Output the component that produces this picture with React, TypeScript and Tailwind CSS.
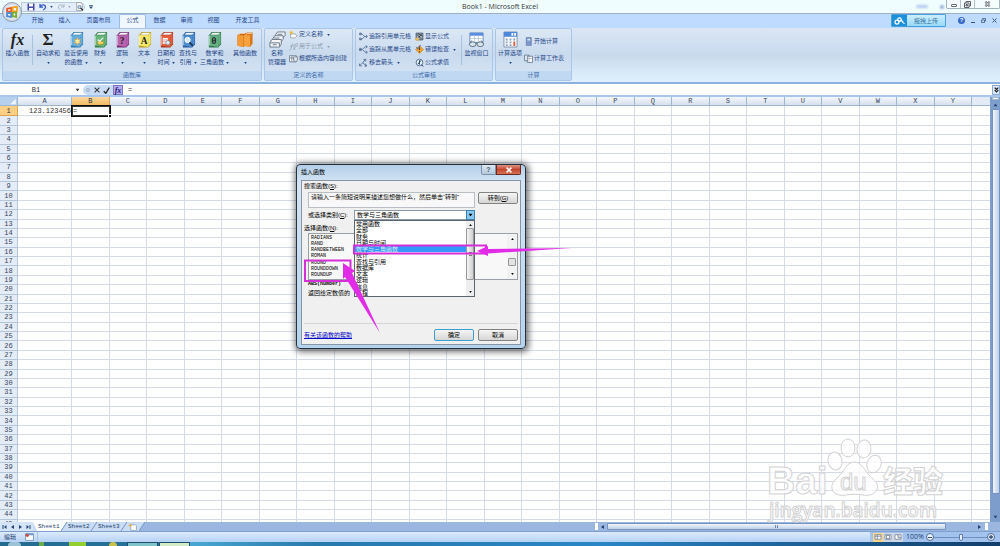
import type { ReactNode } from "react";

const columns = "ABCDEFGHIJKLMNOPQRSTUVWXY".split("");
const rows = Array.from({ length: 45 }, (_, i) => i + 1);

const ribbonTabs = [
  { label: "开始", width: "w-[27px]" },
  { label: "插入", width: "w-[27px]" },
  { label: "页面布局", width: "w-[41px]" },
  { label: "公式", width: "w-[27px]", active: true },
  { label: "数据", width: "w-[27px]" },
  { label: "审阅", width: "w-[27px]" },
  { label: "视图", width: "w-[27px]" },
  { label: "开发工具", width: "w-[41px]" },
];

const functionList = ["RADIANS", "RAND", "RANDBETWEEN", "ROMAN", "ROUND", "ROUNDDOWN", "ROUNDUP"];

const categories = [
  "常用函数",
  "全部",
  "财务",
  "日期与时间",
  "数学与三角函数",
  "统计",
  "查找与引用",
  "数据库",
  "文本",
  "逻辑",
  "信息",
  "工程",
];

const Caret = ({ className = "" }: { className?: string }) => (
  <svg viewBox="0 0 4 3" className={`h-[2px] w-[3px] shrink-0 ${className}`} aria-hidden="true">
    <path d="M0 0h4L2 3z" fill="currentColor" />
  </svg>
);

const Book = ({ color, dark, children }: { color: string; dark: string; children?: ReactNode }) => (
  <svg viewBox="0 0 16 18" className="h-[17px] w-[15px]" aria-hidden="true">
    <path d="M2 4.500 5 1h10v13l-3 3.500H2z" fill={dark} />
    <path d="M3.500 4 6 1.800h8.200L12 4z" fill="#f4f8fb" />
    <path d="M12 4.500 14.500 2v11.500L12 16.500z" fill={color} />
    <path d="M2 4.500h10v12.500L2 15.500z" fill={color} />
    <path d="M2.500 5v10.200" stroke="#fff" strokeOpacity=".5" />
    {children}
  </svg>
);

const Glyph = ({ children, color = "#222" }: { children: string; color?: string }) => (
  <text x="7.500" y="14" textAnchor="middle" fontSize="10" fontWeight="700" fontFamily="Liberation Serif, serif" fill={color}>
    {children}
  </text>
);

const library = [
  {
    lines: ["自动求和"],
    width: "w-[30px]",
    icon: <span className="font-['Liberation_Serif',serif] text-[17px] leading-[17px] font-bold text-[#222]">Σ</span>,
  },
  {
    lines: ["最近使用", "的函数"],
    width: "w-[26px]",
    icon: (
      <Book color="#64aede" dark="#2f76ad">
        <path d="m9 7 1 2.500 2.500-.5-1.500 2 1.500 2-2.500-.5L9 15l-1-2.500-2.500.5L7 11 5.500 9l2.500.5z" fill="#fff0a8" stroke="#ed9f32" strokeWidth=".6" />
      </Book>
    ),
  },
  {
    lines: ["财务"],
    width: "w-[22px]",
    icon: (
      <Book color="#67b57a" dark="#32804b">
        <ellipse cx="8" cy="12.500" rx="3.500" ry="2" fill="#f3d25a" stroke="#9b7a19" strokeWidth=".6" />
        <path d="m5 9 2 2 4-4" fill="none" stroke="#e9f7e9" strokeWidth="1.500" />
      </Book>
    ),
  },
  {
    lines: ["逻辑"],
    width: "w-[22px]",
    icon: (
      <Book color="#b763b0" dark="#742d72">
        <Glyph>?</Glyph>
      </Book>
    ),
  },
  {
    lines: ["文本"],
    width: "w-[22px]",
    icon: (
      <Book color="#f5e96c" dark="#b99d24">
        <Glyph>A</Glyph>
      </Book>
    ),
  },
  {
    lines: ["日期和", "时间"],
    width: "w-[22px]",
    icon: (
      <Book color="#e5603c" dark="#a93621">
        <path d="M4 7.500h5.500v6H4z" fill="#fff" />
        <path d="M4 9.500h5.500M4 11.500h5.500" stroke="#bc5a4d" strokeWidth=".6" />
        <circle cx="9.500" cy="12.500" r="2.300" fill="#e8f1fa" stroke="#54779b" strokeWidth=".7" />
      </Book>
    ),
  },
  {
    lines: ["查找与", "引用"],
    width: "w-[22px]",
    icon: (
      <Book color="#4f8fd0" dark="#24579b">
        <circle cx="7" cy="9.500" r="2.800" fill="#d6eafc" stroke="#fff" />
        <path d="m9 12 3.500 3.500" stroke="#222f4c" strokeWidth="1.700" />
      </Book>
    ),
  },
  {
    lines: ["数学和", "三角函数"],
    width: "w-[31px]",
    icon: (
      <Book color="#66b083" dark="#2d7748">
        <Glyph>θ</Glyph>
      </Book>
    ),
  },
  {
    lines: ["其他函数"],
    width: "w-[30px]",
    icon: (
      <svg viewBox="0 0 18 18" className="h-[17px] w-[18px]" aria-hidden="true">
        <path d="M1 4.500 4 2h6v12l-2 3-7-1.500z" fill="#c96a15" />
        <path d="M1 4.500h6.500V17L1 15.500z" fill="#f39b38" />
        <path d="M8 4.500 11 1.500h6v12l-2.500 3.500-6.500-1.500z" fill="#d67416" />
        <path d="M8 4.500h6.500V17L8 15.500z" fill="#f7a13f" />
        <path d="m2.500 4 2-1.500H9M9.500 4l2-1.500H16" stroke="#fff3df" strokeWidth=".8" fill="none" />
      </svg>
    ),
  },
];

const BigButton = ({
  icon,
  lines,
  width,
  caret = true,
}: {
  icon: ReactNode;
  lines: string[];
  width: string;
  caret?: boolean;
}) => (
  <button type="button" className={`flex shrink-0 flex-col items-center pt-[2px] ${width}`}>
    <span className="flex h-[17px] items-center justify-center">{icon}</span>
    <span className="mt-px h-[9px]">{lines[0]}</span>
    <span className="flex h-[9px] items-center justify-center gap-[2px]">
      {lines[1]}
      {caret && <Caret />}
    </span>
  </button>
);

const SmallButton = ({
  icon,
  label,
  caret,
  disabled,
}: {
  icon: ReactNode;
  label: string;
  caret?: boolean;
  disabled?: boolean;
}) => (
  <button type="button" disabled={disabled} className="flex items-center gap-px whitespace-nowrap disabled:text-[#8b98ab]">
    <svg viewBox="0 0 16 16" className="h-[9px] w-[9px] shrink-0" aria-hidden="true" fill="none">
      {icon}
    </svg>
    {label}
    {caret && <Caret className="ml-[3px]" />}
  </button>
);

const Group = ({ title, width, children }: { title: string; width: string; children: ReactNode }) => (
  <section
    className={`flex shrink-0 flex-col overflow-hidden rounded-[2px] border border-[#a9c5e8] bg-linear-to-b from-[#dce8f6] via-[#c9daee] to-[#d7e6f6] ${width}`}
  >
    <div className="flex h-[42px]">{children}</div>
    <h2 className="h-[9px] bg-[#c0d8f1] text-center text-[#3e6aaa]">{title}</h2>
  </section>
);

const TitleBar = () => (
  <header className="relative flex h-[13px] items-center bg-[#effdff] text-[#444]">
    <div className="ml-[21px] flex h-[10px] w-[64px] items-center gap-[4px] rounded-r-full border border-[#b8cbe0] bg-[#e4eefa] pl-[5px] text-[#35527c]">
      <button type="button" aria-label="保存">
        <svg viewBox="0 0 16 16" className="h-[8px] w-[8px]">
          <path d="M1 1h14v14H1z" fill="#4249a7" />
          <path d="M4 1h8v6H4zM4 10h8v5H4z" fill="#fff" />
        </svg>
      </button>
      <button type="button" aria-label="撤消" className="flex items-center gap-[3px]">
        <svg viewBox="0 0 16 16" className="h-[8px] w-[8px]" fill="none">
          <path d="M2 2v6h6M3 7c3-5 10-4 10 1 0 3-2 5-5 6" stroke="#3156c8" strokeWidth="2.500" />
        </svg>
        <Caret />
      </button>
      <button type="button" aria-label="恢复" className="flex items-center gap-[3px] text-[#9ba9ba]">
        <svg viewBox="0 0 16 16" className="h-[8px] w-[8px]" fill="none">
          <path d="M14 2v6H8M13 7C10 2 3 3 3 8c0 3 2 5 4 6" stroke="#a9b7c8" strokeWidth="2" />
        </svg>
        <Caret />
      </button>
      <button type="button" aria-label="打印预览">
        <svg viewBox="0 0 16 16" className="h-[9px] w-[9px]">
          <path d="M3 1h7l3 3v11H3z" fill="#fff" stroke="#777" />
          <circle cx="8" cy="9" r="3" fill="#b9d9f1" stroke="#3d5573" />
          <path d="m10 11 4 4" stroke="#111" strokeWidth="2" />
        </svg>
      </button>
    </div>
    <button type="button" aria-label="自定义快速访问工具栏" className="ml-[4px] text-[#35527c]">
      <svg viewBox="0 0 5 5" className="h-[4px] w-[4px]">
        <path d="M0 0h5v1H0zM0 2h5L2.500 5z" fill="currentColor" />
      </svg>
    </button>
    <h1 className="absolute inset-x-0 text-center font-['Open_Sans','Noto_Sans',sans-serif] text-[7px] leading-[13px] text-[#333]">
      Book1 - Microsoft Excel
    </h1>
    <div className="ml-auto flex items-center gap-[12px] pr-[2px]">
      <span className="h-[3px] w-[12px] rounded-full bg-[#b5c9ee] blur-[1px]" />
      <span className="h-[4px] w-[4px] rounded-full bg-[#8fa6ce] blur-[1px]" />
    </div>
    <div className="relative mb-auto flex h-[9px] w-[54px] rounded-b-[2px] border border-t-0 border-[#a4b2be] bg-[#f4fcfe]">
      <button type="button" aria-label="最小化" className="flex w-[14px] items-center justify-center border-r border-[#b4c2cd]">
        <span className="mt-[2px] h-[3px] w-[6px] rounded-[1px] border border-[#626b74] bg-white" />
      </button>
      <button type="button" aria-label="还原" className="flex w-[14px] items-center justify-center border-r border-[#b4c2cd]">
        <svg viewBox="0 0 14 14" className="h-[7px] w-[7px]" fill="white" stroke="#59636d" strokeWidth="2">
          <path d="M4 1h9v9H4z" />
          <path d="M1 4h9v9H1zM4 7h3v3H4z" />
        </svg>
      </button>
      <button type="button" aria-label="关闭" className="flex flex-1 items-center justify-center">
        <svg viewBox="0 0 14 14" className="h-[6px] w-[7px]" fill="none">
          <path d="m2 2 10 10M12 2 2 12" stroke="#535c65" strokeWidth="5" />
          <path d="m2 2 10 10M12 2 2 12" stroke="white" strokeWidth="2" />
        </svg>
      </button>
    </div>
    <button
      type="button"
      aria-label="Office 按钮"
      className="absolute top-[2px] left-[2px] z-20 flex h-[20px] w-[20px] items-center justify-center rounded-full border border-[#8e9bb0] bg-radial from-white via-[#e6ebf2] to-[#aeb9ca]"
    >
      <svg viewBox="0 0 20 20" className="h-[14px] w-[14px]" fill="none" strokeWidth="2.600">
        <path d="M3 5.500 9 4v5.500H3z" stroke="#e5572c" />
        <path d="M11 3.500 17 2.500V9h-6z" stroke="#f2a51f" />
        <path d="M3 11.500h6V17l-6-1z" stroke="#4a87d4" />
        <path d="M11 11h5v6l-5-1z" stroke="#79ac34" />
      </svg>
    </button>
  </header>
);

const TabRow = () => (
  <nav className="flex h-[15px] items-end border-t border-[#9fb0c4] bg-[#bfdbff] pl-[24px]">
    {ribbonTabs.map((tab) => (
      <button
        key={tab.label}
        type="button"
        className={`h-[14px] pb-[2px] ${tab.width} ${
          tab.active ? "rounded-t-[2px] border border-b-0 border-[#9bbbe3] bg-[#eff6fe]" : ""
        }`}
      >
        {tab.label}
      </button>
    ))}
    <div className="mb-auto ml-auto flex items-center">
      <button type="button" className="flex h-[13px] w-[55px] overflow-hidden rounded-[1px] border border-[#4a9fdb] bg-linear-to-b from-[#cbeeff] to-[#99d8fa] text-[#35759f]">
        <span className="flex h-full w-[15px] items-center justify-center bg-[#1c91da]">
          <svg viewBox="0 0 22 16" className="h-[8px] w-[11px]" fill="none" stroke="white" strokeWidth="2.500">
            <circle cx="6" cy="10" r="4" />
            <circle cx="11" cy="5" r="3.500" />
            <path d="M10 11c0-5 8-6 8 1M20 12v2" />
          </svg>
        </span>
        <span className="flex-1 leading-[12px]">拖拽上传</span>
      </button>
      <div className="flex w-[54px] items-center justify-end gap-[6px] pr-[3px] text-[#3d5577]">
        <button type="button" aria-label="帮助" className="h-[7px] w-[7px] rounded-full bg-[#3569c4] text-[6px] leading-[7px] font-bold text-white">
          ?
        </button>
        <button type="button" aria-label="最小化窗口" className="flex h-[5px] w-[4px] items-end">
          <span className="h-px w-full bg-[#3d5577]" />
        </button>
        <button type="button" aria-label="还原窗口">
          <svg viewBox="0 0 10 10" className="h-[5px] w-[5px]" fill="none" stroke="currentColor" strokeWidth="1.500">
            <path d="M3 3V1h6v5H7M1 4h6v5H1z" />
          </svg>
        </button>
        <button type="button" aria-label="关闭窗口">
          <svg viewBox="0 0 10 10" className="h-[5px] w-[5px]" stroke="currentColor" strokeWidth="2">
            <path d="m1 1 8 8M9 1 1 9" />
          </svg>
        </button>
      </div>
    </div>
  </nav>
);

const Ribbon = () => (
  <div className="flex gap-[2px] border-b-2 border-[#8db1df] bg-linear-to-b from-[#dbe6f4] via-[#c9daed] to-[#e0f1fd] px-[2px] pb-px">
    <Group title="函数库" width="w-[260px]">
      <BigButton
        lines={["插入函数"]}
        width="w-[29px]"
        caret={false}
        icon={<span className="font-['Liberation_Serif',serif] text-[16px] leading-[17px] font-bold text-[#222] italic">fx</span>}
      />
      <span className="my-[6px] w-px bg-[#a8c1df]" />
      {library.map((item) => (
        <BigButton key={item.lines[0]} {...item} />
      ))}
    </Group>
    <Group title="定义的名称" width="w-[89px]">
      <BigButton
        lines={["名称", "管理器"]}
        width="w-[24px]"
        caret={false}
        icon={
          <svg viewBox="0 0 18 18" className="h-[17px] w-[17px]" fill="#f4f6f8" stroke="#687788" strokeWidth="1">
            <path d="M7 4 9 1h8v4l-2 2H7z" />
            <path d="m4 8 2-3h9v4l-2 2H4z" />
            <path d="M1 12.500 3 9h10v5l-2 3H1z" />
            <path d="M1 12.500h10V17M4 14.500h4M5 7.500h6M9 3.500h5" />
          </svg>
        }
      />
      <div className="flex flex-col gap-[3px] pt-px">
        <SmallButton
          label="定义名称"
          caret
          icon={
            <>
              <path d="M3 7h7l5 3-5 4H3z" fill="#fff" stroke="#69788a" />
              <path d="m4 1 1 2 3 0-2 2 1 3-3-2-3 2 1-3-2-2h3z" fill="#f2b632" />
            </>
          }
        />
        <SmallButton
          label="用于公式"
          caret
          disabled
          icon={<path d="M1 15C5 15 3 3 8 3M2 7h5M8 7l5-4h3v4h-4zM8 9l3 5M12 9l-5 5" stroke="#929eac" strokeWidth="1.300" />}
        />
        <SmallButton
          label="根据所选内容创建"
          icon={
            <>
              <path d="M1 3h12v11H1zM1 7h12M5 3v11M9 7v7" stroke="#5e6c7d" strokeWidth="1.300" fill="#fff" />
              <path d="M8 5h7v6l-3 3-4-3z" fill="#d8e3ed" stroke="#4c5a6c" />
            </>
          }
        />
      </div>
    </Group>
    <Group title="公式审核" width="w-[138px]">
      <div className="flex w-[56px] flex-col gap-[4px] pt-[3px] pl-[3px]">
        <SmallButton
          label="追踪引用单元格"
          icon={<path d="M2 3h3l5 5-5 5H2M9 8h5M12 5l3 3-3 3M1 2h3v3H1zM1 11h3v3H1z" stroke="#48678d" strokeWidth="1.400" />}
        />
        <SmallButton
          label="追踪从属单元格"
          icon={<path d="M1 8h5l5-5h3M6 8l5 5h3M12 1l3 2-3 3M12 10l3 3-3 2M1 6h3v4H1z" stroke="#48678d" strokeWidth="1.400" />}
        />
        <SmallButton
          label="移去箭头"
          caret
          icon={<path d="m2 13 5-5 4-5M7 8l5 6M8 3l4-1v4M1 10v4h4M11 10l3 4-4 1" stroke="#48678d" strokeWidth="1.500" />}
        />
      </div>
      <div className="flex w-[48px] flex-col gap-[4px] pt-[3px] pl-[3px]">
        <SmallButton
          label="显示公式"
          icon={
            <>
              <path d="M2 2h12v12H2z" fill="#a6b1bc" stroke="#394e66" strokeWidth="1.500" />
              <path d="m3 4 9 9M12 3l-7 9M5 3l8 4" stroke="#222" strokeWidth="1.200" />
              <path d="M1 10h6v5H1z" fill="#eab75a" />
            </>
          }
        />
        <SmallButton
          label="错误检查"
          caret
          icon={
            <>
              <path d="m8 1 7 7-7 7-7-7z" fill="#f6a331" stroke="#bd741a" />
              <path d="M8 4v5M8 11v2" stroke="#54401d" strokeWidth="2" />
              <path d="m2 3 3 4 5-7" stroke="#376dbb" strokeWidth="1.500" />
            </>
          }
        />
        <SmallButton
          label="公式求值"
          icon={
            <>
              <circle cx="8" cy="8" r="6" fill="#e7f2fb" stroke="#466589" strokeWidth="1.500" />
              <path d="M8 4v8M5 10c4 0 2-5 6-5M11 12l4 3" stroke="#29466f" strokeWidth="1.700" />
            </>
          }
        />
      </div>
      <span className="my-[6px] ml-px w-px bg-[#a8c1df]" />
      <BigButton
        lines={["监视窗口"]}
        width="w-[29px]"
        caret={false}
        icon={
          <svg viewBox="0 0 18 18" className="h-[17px] w-[17px]" fill="none">
            <path d="M2 2h14v10H2z" fill="#fff" stroke="#6088c0" />
            <path d="M2 2h14v3H2z" fill="#5a8dde" />
            <path d="M3 8h12M7 5v6M11 5v6" stroke="#b8c8dd" />
            <ellipse cx="5" cy="14" rx="3.500" ry="2.500" fill="#dce6ef" stroke="#586a7e" />
            <ellipse cx="13" cy="14" rx="3.500" ry="2.500" fill="#dce6ef" stroke="#586a7e" />
            <path d="M8.500 13h1M2 13l2-3M16 13l-2-3" stroke="#586a7e" />
          </svg>
        }
      />
    </Group>
    <Group title="计算" width="w-[77px]">
      <BigButton
        lines={["计算选项"]}
        width="w-[28px]"
        icon={
          <svg viewBox="0 0 16 18" className="h-[17px] w-[15px]">
            <path d="M1 1h14v16H1z" fill="#f8fafc" stroke="#8093ad" />
            <path d="M1 1h14v5H1z" fill="#4d87d9" />
            <path d="M9 2h2v3H9zM12 2h2v3h-2z" fill="#fff" />
            <path d="M3 8h2v2H3zM7 8h2v2H7zM11 8h2v2h-2zM3 11h2v2H3zM7 11h2v2H7zM3 14h2v2H3zM7 14h2v2H7z" fill="#8fa4bf" />
            <path d="M11 11h2v5h-2z" fill="#dd5d45" />
          </svg>
        }
      />
      <div className="flex flex-col gap-[8px] pt-[8px]">
        <SmallButton
          label="开始计算"
          icon={
            <>
              <path d="M4 1h9v14H4z" fill="#738ec4" stroke="#5e719a" />
              <path d="M6 3h5v3H6z" fill="#dceaff" />
              <path d="M6 8h6M6 11h6M6 14h6" stroke="#c5d0ea" strokeDasharray="1 1" />
            </>
          }
        />
        <SmallButton
          label="计算工作表"
          icon={
            <>
              <path d="M1 2h8v10H1z" fill="#e8eef6" stroke="#50657e" strokeWidth="1.300" />
              <path d="M6 4h9v11H6z" fill="#fff" stroke="#50657e" strokeWidth="1.300" />
              <path d="M9 5v9M6 8h9" stroke="#8798ad" />
            </>
          }
        />
      </div>
    </Group>
  </div>
);

const FormulaBar = () => (
  <div className="flex h-[13px] items-start border-b-2 border-[#a9c7ee] bg-white pt-px font-['Liberation_Mono','Noto_Sans_CJK_SC',monospace] text-[7px] leading-[10px] text-[#333]">
    <div className="flex h-[10px] w-[83px] items-center">
      <input aria-label="名称框" defaultValue="B1" className="h-[10px] w-[72px] text-center outline-none" />
      <button type="button" aria-label="名称列表" className="ml-[4px]">
        <Caret className="scale-150" />
      </button>
    </div>
    <div className="flex h-[10px] w-[40px] items-center gap-[3px] rounded-l-full bg-[#c9dcf5] pl-[3px]">
      <span className="h-[4px] w-[4px] rounded-full border border-[#9dafc5]" />
      <button type="button" aria-label="取消">
        <svg viewBox="0 0 10 10" className="ml-px h-[6px] w-[6px]" stroke="#333" strokeWidth="1.700">
          <path d="m1 1 8 8M9 1 1 9" />
        </svg>
      </button>
      <button type="button" aria-label="输入">
        <svg viewBox="0 0 10 10" className="h-[7px] w-[7px]" fill="none" stroke="#222" strokeWidth="1.800">
          <path d="m1 6 3 3 5-8" />
        </svg>
      </button>
      <button type="button" className="ml-auto h-[10px] w-[10px] border border-[#7b79c8] bg-[#b5aaf0] font-['Liberation_Serif',serif] text-[8px] leading-[7px] font-bold text-[#251d72] italic">
        fx
      </button>
    </div>
    <input aria-label="编辑栏" defaultValue="=" className="h-[10px] min-w-0 flex-1 pl-[5px] outline-none" />
    <button type="button" aria-label="展开编辑栏" className="flex h-[10px] w-[8px] items-center justify-center border border-[#8daad0] bg-[#dbe9fa]">
      <svg viewBox="0 0 8 10" className="h-[6px] w-[5px]" fill="none" stroke="#222" strokeWidth="2">
        <path d="m1 1 3 3 3-3M1 5l3 3 3-3" />
      </svg>
    </button>
  </div>
);

const Sheet = () => (
  <div className="flex min-h-0 flex-1">
    <div className="min-w-0 flex-1 overflow-hidden bg-white">
      <table className="h-[432px] w-full table-fixed border-separate border-spacing-0 font-['Liberation_Mono',monospace] text-[7px] leading-[8px] text-[#333]">
        <colgroup>
          <col className="w-[18px]" />
          <col className="w-[54px]" />
          {columns.slice(1).map((c) => (
            <col key={c} />
          ))}
          <col className="w-[18px]" />
        </colgroup>
        <thead>
          <tr>
            <th className="border-r border-b border-[#9eb6ce] bg-[#b7d0ee] p-0">
              <svg viewBox="0 0 10 10" className="ml-auto h-[7px] w-[8px]">
                <path d="M9 1v8H1z" fill="#eef5fd" />
              </svg>
            </th>
            {columns.map((c) => (
              <th
                key={c}
                scope="col"
                className={`border-r border-b p-0 font-normal ${
                  c === "B"
                    ? "border-[#e0a24a] bg-linear-to-b from-[#fbd9a0] to-[#f2bb62]"
                    : "border-[#9eb6ce] bg-linear-to-b from-[#f3f7fb] to-[#d6e0ec] text-[#36475e]"
                }`}
              >
                {c}
              </th>
            ))}
            <th className="border-b border-[#9eb6ce] bg-[#e4ebf4] p-0" />
          </tr>
        </thead>
        <tbody>
          {rows.map((r) => (
            <tr key={r}>
              <th
                scope="row"
                className={`border-r border-b p-0 font-normal ${
                  r === 1 ? "border-[#e0a24a] bg-[#fbcf86]" : "border-[#b3c5db] bg-[#e4ecf7] text-[#36475e]"
                }`}
              >
                {r}
              </th>
              {columns.map((c) => (
                <td
                  key={c}
                  className={`p-0 whitespace-nowrap ${
                    r === 1 && c === "B"
                      ? "relative border border-[#333] outline-1 outline-[#111]"
                      : "border-r border-b border-[#d5dce8]"
                  } ${c === "A" ? "text-right" : ""}`}
                >
                  {r === 1 && c === "A" && "123.123456"}
                  {r === 1 && c === "B" && (
                    <>
                      =<span className="absolute -right-[2px] -bottom-[2px] h-[3px] w-[3px] border-t border-l border-white bg-black" />
                    </>
                  )}
                </td>
              ))}
              <td className="border-b border-[#d5dce8] p-0" />
            </tr>
          ))}
        </tbody>
      </table>
    </div>
    <div className="flex w-[10px] flex-col items-center border-l border-[#7f9fce] bg-[#7d9dcc] text-[#24406e]">
      <span className="h-[3px] w-[7px] border border-[#9eb6ce] bg-white" />
      <button type="button" aria-label="向上滚动" className="flex h-[9px] items-center">
        <Caret className="scale-150 rotate-180" />
      </button>
      <span className="w-[8px] flex-1 rounded-[1px] border border-[#7593c1] bg-linear-to-r from-[#f1f5fb] to-[#bfd0e9]" />
      <span className="h-[18px]" />
      <button type="button" aria-label="向下滚动" className="flex h-[10px] items-center">
        <Caret className="scale-150" />
      </button>
    </div>
  </div>
);

const SheetTabs = () => (
  <div className="flex h-[9px] items-stretch bg-[#9bb7e0] text-[#24406e]">
    <div className="flex w-[33px] items-center justify-around bg-[#d4e4f8]">
      {["M1 0h2v8H1zM9 0v8L4 4z", "M8 0v8L2 4z", "M2 0v8l6-4z", "M1 0v8l5-4zM7 0h2v8H7z"].map((d, i) => (
        <button key={d} type="button" aria-label={["第一张", "上一张", "下一张", "最后一张"][i]}>
          <svg viewBox="0 0 10 8" className="h-[4px] w-[5px]">
            <path d={d} fill="currentColor" />
          </svg>
        </button>
      ))}
    </div>
    <div className="relative flex w-[112px] font-['Liberation_Mono',monospace] text-[6px] leading-[9px]">
      <svg viewBox="0 0 112 9" preserveAspectRatio="none" className="absolute inset-0 h-full w-full" aria-hidden="true">
        <path d="M0 0h112l-6 9H0z" fill="#c9dcf4" />
        <path d="M0 0h34l-6 9H4z" fill="#fff" />
        <path d="m34 0-6 9M64 0l-6 9M94 0l-6 9M112 0l-6 9" stroke="#7696c3" fill="none" />
      </svg>
      {["Sheet1", "Sheet2", "Sheet3"].map((s) => (
        <button key={s} type="button" className="relative w-[30px] pl-[5px] text-left">
          {s}
        </button>
      ))}
      <button type="button" aria-label="插入工作表" className="relative flex w-[18px] items-center justify-center">
        <svg viewBox="0 0 16 14" className="h-[8px] w-[9px]">
          <path d="M5 3h8l2 2v8H5z" fill="#fff" stroke="#67809f" />
          <path d="m4 0 1 3 3 1-3 1-1 3-1-3-3-1 3-1z" fill="#eba832" />
        </svg>
      </button>
    </div>
    <div className="flex-1" />
    <div className="flex w-[405px] items-center pr-[12px]">
      <span className="h-[7px] w-[3px] bg-white" />
      <button type="button" aria-label="向左滚动" className="flex w-[9px] justify-center">
        <Caret className="scale-150 rotate-90" />
      </button>
      <span className="flex h-[7px] w-[339px] items-center justify-center rounded-[1px] border border-[#7593c1] bg-linear-to-b from-[#f1f5fb] to-[#bfd0e9] text-[#6e87ad]">
        <span className="h-[3px] w-[3px] border-x border-current" />
      </span>
      <button type="button" aria-label="向右滚动" className="ml-auto pr-[4px]">
        <Caret className="scale-150 -rotate-90" />
      </button>
      <span className="h-[7px] w-[3px] bg-white" />
    </div>
  </div>
);

const StatusBar = () => (
  <footer className="flex h-[11px] items-center border-t border-[#7f9fce] bg-linear-to-b from-[#dcebfc] to-[#b6d2f5] pl-[4px] leading-[10px] text-[#24406e]">
    <span>编辑</span>
    <svg viewBox="0 0 16 14" className="ml-[9px] h-[8px] w-[9px]" aria-hidden="true">
      <path d="M1 1h14v12H1z" fill="#fff" stroke="#6f8eb8" strokeWidth="1.500" />
      <path d="M1 1h14v3H1z" fill="#6f9bd8" />
      <circle cx="4" cy="4" r="3" fill="#cf4a38" />
    </svg>
    <span className="ml-[3px] h-full w-px bg-[#a9c3e6]" />
    <div className="ml-auto flex h-full w-[130px] items-center bg-[#a3c3ee] pl-[3px]">
      {["bg-[#fbd58a]", "bg-[#cfd9e6]", "bg-[#cfd9e6]"].map((bg, i) => (
        <button key={i} type="button" aria-label={["普通", "页面布局", "分页预览"][i]} className={`flex h-[9px] w-[10px] items-center justify-center ${bg}`}>
          <svg viewBox="0 0 10 8" className="h-[6px] w-[8px]" fill="#fff" stroke="#687a94">
            <path d={["M1 1h8v6H1zM1 3h8M4 1v6", "M1 1h8v6H1zM3 2h4v4H3z", "M1 1h8v6H1zM5 1v4h4"][i]} />
          </svg>
        </button>
      ))}
      <span className="ml-[3px] w-[20px] font-['Open_Sans','Noto_Sans',sans-serif] text-[7px]">100%</span>
      <button type="button" aria-label="缩小" className="flex h-[8px] w-[8px] items-center justify-center rounded-full border border-[#4d6a94] bg-[#eaf2fc]">
        <span className="h-px w-[4px] bg-[#334e78]" />
      </button>
      <input
        type="range"
        aria-label="显示比例"
        defaultValue={50}
        className="h-[8px] w-[53px] appearance-none bg-transparent [&::-webkit-slider-runnable-track]:h-px [&::-webkit-slider-runnable-track]:bg-[#6c8fc0] [&::-webkit-slider-thumb]:-mt-[3px] [&::-webkit-slider-thumb]:h-[7px] [&::-webkit-slider-thumb]:w-[4px] [&::-webkit-slider-thumb]:appearance-none [&::-webkit-slider-thumb]:rounded-b-[2px] [&::-webkit-slider-thumb]:border [&::-webkit-slider-thumb]:border-[#5f7da8] [&::-webkit-slider-thumb]:bg-[#e9f1fb]"
      />
      <button type="button" aria-label="放大" className="flex h-[8px] w-[8px] items-center justify-center rounded-full border border-[#4d6a94] bg-[#eaf2fc]">
        <svg viewBox="0 0 6 6" className="h-[4px] w-[4px]">
          <path d="M2 0h2v2h2v2H4v2H2V4H0V2h2z" fill="#334e78" />
        </svg>
      </button>
    </div>
  </footer>
);

const Taskbar = () => (
  <div className="flex h-[4px] items-stretch overflow-hidden bg-linear-to-r from-[#256b8f] via-[#2a86c6] via-60% to-[#123e6b]">
    <span className="ml-[8px] w-[13px] rounded-t-full bg-[#9cc4d6]" />
    <span className="ml-[18px] w-[5px] bg-[#6cae4c]" />
    <span className="ml-[25px] w-[17px] bg-[#92cf2f]" />
    <span className="ml-[23px] w-[8px] rounded-t-full bg-[#c9c14a]" />
    <span className="ml-[10px] w-[31px] border border-b-0 border-[#1d4f6e] bg-[#7fc4c9]" />
    <span className="ml-px w-[31px] border border-b-0 border-[#1d4f6e] bg-[#d4ebc8]" />
    <span className="w-[130px] bg-linear-to-r from-[#48a8d3] to-transparent" />
  </div>
);

const dialogButton =
  "h-[12px] w-[40px] rounded-[2px] border bg-linear-to-b from-[#f5f5f5] to-[#d6d6d6] leading-[10px]";

const InsertFunctionDialog = () => (
  <div
    role="dialog"
    aria-labelledby="dialog-title"
    className="absolute top-[164px] left-[296px] z-30 w-[230px] rounded-[4px] border border-[#25303c] bg-linear-to-b from-[#b3cfe9] via-[#d5e5f4] via-10% to-[#b4d3ee] px-[4px] pb-[3px] text-black shadow-[1px_1px_6px_2px_rgba(0,0,0,0.55)]"
  >
    <div className="flex h-[15px]">
      <h2 id="dialog-title" className="flex-1 leading-[14px]">
        插入函数
      </h2>
      <button type="button" aria-label="帮助" className="h-[10px] w-[15px] rounded-bl-[2px] border border-t-0 border-[#7e93aa] bg-linear-to-b from-[#dce8f3] to-[#b3c8dc] text-[7px] leading-[9px] font-bold text-[#4b5c6e]">
        ?
      </button>
      <button type="button" aria-label="关闭" className="flex h-[10px] w-[25px] items-center justify-center rounded-br-[2px] border border-t-0 border-[#6e2a20] bg-linear-to-b from-[#dd9484] via-[#c4452d] to-[#d37555]">
        <svg viewBox="0 0 10 10" className="h-[6px] w-[6px]" stroke="#fff" strokeWidth="2.500">
          <path d="m1 1 8 8M9 1 1 9" />
        </svg>
      </button>
    </div>
    <div className="h-[165px] border border-[#8795a5] bg-[#f0f0f0] pr-[2px] pl-[2px]">
      <label htmlFor="search" className="block pt-px">
        搜索函数(<u>S</u>):
      </label>
      <div className="flex items-start justify-between pl-[4px]">
        <textarea
          id="search"
          defaultValue="请输入一条简短说明来描述您想做什么，然后单击“转到”"
          className="mt-px block h-[16px] w-[167px] resize-none overflow-hidden border border-[#b9bdc4] bg-[#f8f8f8] pl-[2px] whitespace-nowrap outline-none"
        />
        <button type="button" className={`${dialogButton} mt-px border-[#838383]`}>
          转到(<u>G</u>)
        </button>
      </div>
      <div className="mt-[2px] flex h-[10px] items-center pl-[4px]">
        <label htmlFor="category" className="w-[46px] whitespace-nowrap">
          或选择类别(<u>C</u>):
        </label>
        <div className="relative h-[10px] w-[121px]">
          <select id="category" className="block h-full w-full appearance-none border border-[#8d9aa8] bg-white pl-[2px] leading-[8px] outline-none">
            <option>数学与三角函数</option>
          </select>
          <span className="absolute top-0 right-0 flex h-[10px] w-[9px] items-center justify-center border border-[#3c7fb1] bg-[#86c8ef]">
            <Caret className="scale-150" />
          </span>
          <div className="absolute top-[10px] left-0 z-10 flex h-[77px] w-[121px] border border-[#5d6670] bg-white leading-[6px]">
            <ul role="listbox" aria-label="类别" className="flex flex-1 flex-col">
              {categories.map((c) => (
                <li
                  key={c}
                  role="option"
                  aria-selected={c === "数学与三角函数"}
                  className="min-h-0 flex-1 pl-px aria-selected:bg-[#3399ff] aria-selected:text-[#d7e9fb]"
                >
                  {c}
                </li>
              ))}
            </ul>
            <div className="flex w-[8px] flex-col items-center justify-between bg-[#eee] py-[3px]">
              <Caret className="rotate-180" />
              <span className="mb-[9px] flex h-[52px] w-[8px] items-center justify-center rounded-[1px] border border-[#999] bg-linear-to-r from-[#f4f4f4] to-[#cfcfcf]">
                <span className="h-[4px] w-[3px] border-y border-[#777]" />
              </span>
              <Caret />
            </div>
          </div>
        </div>
      </div>
      <label htmlFor="functions" className="mt-[4px] block">
        选择函数(<u>N</u>):
      </label>
      <div className="ml-[4px] flex h-[47px] justify-between border border-[#9aa0a8] bg-[#f8f8f8] pl-[2px]">
        <ul id="functions" className="flex flex-col py-px font-['Liberation_Mono',monospace] text-[5px] leading-[6px]">
          {functionList.map((f) => (
            <li key={f} className="min-h-0 flex-1">
              {f}
            </li>
          ))}
        </ul>
        <div className="flex w-[10px] flex-col items-center justify-between bg-[#f2f2f2] py-[4px]">
          <Caret className="rotate-180" />
          <span className="mt-[10px] h-[8px] w-[8px] rounded-[1px] border border-[#999] bg-[#e2e2e2]" />
          <Caret />
        </div>
      </div>
      <p className="ml-[4px] font-['Liberation_Mono',monospace] text-[5px] font-bold">ABS(number)</p>
      <p className="ml-[4px]">返回给定数值的</p>
      <hr className="mt-[25px] border-[#d5d5d5]" />
      <div className="mt-[5px] flex items-center gap-[4px]">
        <a href="#help" className="mr-auto text-[#0000c8] underline">
          有关该函数的帮助
        </a>
        <button type="button" className={`${dialogButton} border-[#3aa0d0]`}>
          确定
        </button>
        <button type="button" className={`${dialogButton} border-[#838383]`}>
          取消
        </button>
      </div>
    </div>
  </div>
);

const Annotations = () => (
  <svg
    viewBox="0 0 280 100"
    className="pointer-events-none absolute top-[240px] left-[300px] z-40 h-[100px] w-[280px]"
    fill="none"
    stroke="#d52fd8"
    strokeWidth="2"
    aria-hidden="true"
  >
    <path d="M54 5.500h132v8H54zM5 20.500h45.500V41H5z" />
    <path d="m177 11 11-5v3l84-1-84 5.500V16z" fill="#e22be6" stroke="none" />
    <path d="m43 23 12 8-3 2 28 60-35-56-2 2z" fill="#e22be6" stroke="none" />
  </svg>
);

const Watermark = () => (
  <svg
    viewBox="0 0 190 90"
    className="pointer-events-none absolute right-[50px] bottom-[20px] z-20 h-[90px] w-[190px]"
    fill="#fff"
    fillOpacity=".75"
    stroke="#d2d2d2"
    strokeWidth="1"
    fontFamily="Liberation Sans, sans-serif"
    aria-hidden="true"
  >
    <ellipse cx="75" cy="25" rx="7" ry="9" transform="rotate(-12 75 25)" />
    <ellipse cx="88" cy="12" rx="7" ry="9" />
    <ellipse cx="104" cy="13" rx="7" ry="9" transform="rotate(8 104 13)" />
    <ellipse cx="114" cy="28" rx="7" ry="9" transform="rotate(20 114 28)" />
    <path d="M94 26c7 0 10 7 15 13 6 6 10 9 8 14-2 6-9 7-14 6-5-1-12-1-17 0-5 1-12 0-14-6-1-6 3-9 8-14 5-6 8-13 14-13z" />
    <text x="7" y="58" fontSize="39" fontWeight="700">
      Bai
    </text>
    <text x="80" y="54" fontSize="24" fontWeight="400">
      du
    </text>
    <text x="123" y="56" fontSize="30" fontWeight="900" fontFamily="Noto Sans CJK SC, sans-serif">
      经验
    </text>
    <text x="9" y="81" fontSize="19" fontWeight="600" fontFamily="Open Sans, Noto Sans, sans-serif">
      jingyan.baidu.com
    </text>
  </svg>
);

const App = () => {
  return (
    <main className="relative flex h-screen flex-col overflow-hidden bg-[#bfdbff] font-['Liberation_Sans','Noto_Sans_CJK_SC',sans-serif] text-[6px] leading-[9px] text-[#1f4787]">
      <TitleBar />
      <TabRow />
      <Ribbon />
      <FormulaBar />
      <Sheet />
      <SheetTabs />
      <StatusBar />
      <Taskbar />
      <InsertFunctionDialog />
      <Annotations />
      <Watermark />
    </main>
  );
};

export default App;
